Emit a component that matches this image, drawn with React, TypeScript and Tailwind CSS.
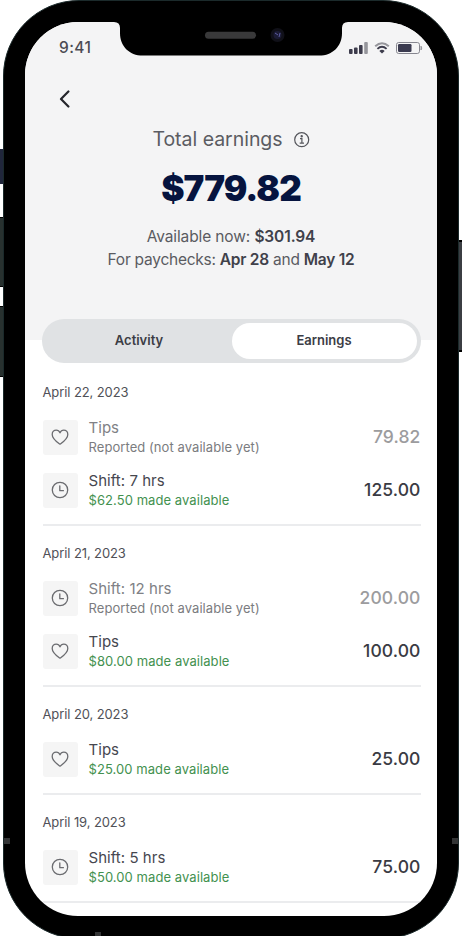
type Kind = "tips" | "shift";

interface Entry {
  kind: Kind;
  title: string;
  note: string;
  amount: string;
  pending?: boolean;
}

interface Day {
  date: string;
  entries: Entry[];
}

const days: Day[] = [
  {
    date: "April 22, 2023",
    entries: [
      { kind: "tips", title: "Tips", note: "Reported (not available yet)", amount: "79.82", pending: true },
      { kind: "shift", title: "Shift: 7 hrs", note: "$62.50 made available", amount: "125.00" },
    ],
  },
  {
    date: "April 21, 2023",
    entries: [
      { kind: "shift", title: "Shift: 12 hrs", note: "Reported (not available yet)", amount: "200.00", pending: true },
      { kind: "tips", title: "Tips", note: "$80.00 made available", amount: "100.00" },
    ],
  },
  {
    date: "April 20, 2023",
    entries: [{ kind: "tips", title: "Tips", note: "$25.00 made available", amount: "25.00" }],
  },
  {
    date: "April 19, 2023",
    entries: [{ kind: "shift", title: "Shift: 5 hrs", note: "$50.00 made available", amount: "75.00" }],
  },
];

function EntryIcon({ kind }: { kind: Kind }) {
  return (
    <svg width="18" height="18" viewBox="0 0 18 18" fill="none" stroke="#6b6c70" strokeWidth="1.3" strokeLinecap="round" strokeLinejoin="round">
      {kind === "tips" ? (
        <path d="M9 16.2C6.2 14.1 1.2 10.8 1.2 6.4 1.2 3.9 3 2.1 5.2 2.1 6.9 2.1 8.3 3.1 9 4.8 9.7 3.1 11.1 2.1 12.8 2.1 15 2.1 16.8 3.9 16.8 6.4 16.8 10.8 11.8 14.1 9 16.2Z" />
      ) : (
        <>
          <circle cx="9" cy="9" r="7.7" />
          <path d="M8.8 4.8V9.7H12.4" />
        </>
      )}
    </svg>
  );
}

function EntryRow({ entry }: { entry: Entry }) {
  return (
    <div className="flex h-[35px] items-center">
      <div className="flex size-[35px] shrink-0 items-center justify-center rounded-[3px] bg-[#f5f5f5] pb-px">
        <EntryIcon kind={entry.kind} />
      </div>
      <div className="mb-[2px] ml-[11px] flex-1 whitespace-nowrap">
        <div className={`text-[15px] leading-[20px] tracking-[0.04px] ${entry.pending ? "text-[#808185]" : "text-[#46474f]"}`}>{entry.title}</div>
        <div className={`text-[13px] leading-[18px] tracking-[0.07px] ${entry.pending ? "text-[#7b7c80]" : "text-[#43914f]"}`}>{entry.note}</div>
      </div>
      <div className={`mb-px text-[17.5px] leading-[20px] font-medium tracking-[0.1px] ${entry.pending ? "text-[#9c9c9e]" : "text-[#3a3b43]"}`}>{entry.amount}</div>
    </div>
  );
}

function DaySection({ day }: { day: Day }) {
  return (
    <section className="border-b-2 border-[#ebecee] pb-[16px]">
      <h2 className="text-[13px] leading-[20px] tracking-[-0.1px] text-[#505157]">{day.date}</h2>
      <div className="mt-[18px] flex flex-col gap-[18px]">
        {day.entries.map((entry) => (
          <EntryRow key={entry.title} entry={entry} />
        ))}
      </div>
    </section>
  );
}

function StatusIcons() {
  return (
    <svg width="76" height="16" viewBox="348 40 76 16" fill="none">
      <rect x="349" y="49" width="3.6" height="5" rx="1" fill="#3d3c4c" />
      <rect x="354" y="47.5" width="3.6" height="6.5" rx="1" fill="#3d3c4c" />
      <rect x="359" y="45" width="3.6" height="9" rx="1" fill="#3d3c4c" />
      <rect x="364.2" y="42" width="3.6" height="12" rx="1" fill="#96969c" />
      <path d="M375.2 46.3Q382 40.2 388.8 46.3" stroke="#96969c" strokeWidth="2" />
      <path d="M377.4 48.9Q382 44.8 386.6 48.9" stroke="#3d3c4c" strokeWidth="1.9" />
      <path d="M379.3 51Q382 48.6 384.7 51L382 53.6Z" fill="#3d3c4c" />
      <rect x="396.5" y="42.5" width="23" height="11" rx="2.2" stroke="#86868f" />
      <rect x="398" y="44" width="13.5" height="8" rx="1.2" fill="#3b3b50" />
      <path d="M421 46.2Q422.6 48 421 50Z" fill="#96969c" stroke="#96969c" />
    </svg>
  );
}

function Notch() {
  return (
    <div className="absolute top-0 left-1/2 -ml-[117px] h-[34px] w-[234px]">
      <svg width="234" height="34" viewBox="0 0 234 34" className="block">
        <path d="M0 0H234Q228 0 228 6V11C228 24 219 33.6 205 33.6H29C15 33.6 6 24 6 11V6Q6 0 0 0Z" fill="#000" />
        <rect x="91" y="9.7" width="51" height="7" rx="3.5" fill="#39393a" />
        <circle cx="163.5" cy="13" r="7" fill="#101018" />
        <circle cx="163.5" cy="13" r="4" fill="#1b1b35" />
        <path d="M161 11L164 13M166 11L165 15" stroke="#5d5da0" />
      </svg>
    </div>
  );
}

export default function App() {
  return (
    <div className="relative h-[936px] w-[462px] overflow-hidden bg-white font-['Inter','Liberation_Sans',sans-serif]">
      <div className="absolute top-[149px] left-0 h-[35px] w-[5px] bg-[#20263b]" />
      <div className="absolute top-[217px] left-0 h-[70px] w-[5px] border-y border-black bg-[#28312f]" />
      <div className="absolute top-[306px] left-0 h-[71px] w-[5px] border-y border-black bg-[#28312f]" />
      <div className="absolute top-[240px] right-0 h-[112px] w-[4px] border-y-2 border-black bg-[#3b3e43]" />

      <div className="relative ml-[3px] h-[939px] w-[456px] rounded-[76px] border border-[#1b2a2b] bg-black px-[21px] pt-[21px]">
        <div className="absolute top-[837px] left-0 h-[6px] w-[6px] bg-[#333435]" />
        <div className="absolute top-[837px] right-0 h-[6px] w-[6px] bg-[#333435]" />
        <div className="absolute top-[931px] left-[91px] h-[5px] w-[6px] bg-[#333435]" />

        <main className="relative flex h-[894px] w-[412px] flex-col overflow-hidden rounded-[53px] bg-white">
          <Notch />
          <header className="flex h-[318px] shrink-0 flex-col bg-[#f4f4f5]">
            <div className="mt-[16px] flex h-[20px] items-center justify-between pr-[13px] pl-[34px]">
              <span className="text-[15.5px] font-medium tracking-[0.4px] text-[#4b4b53]">9:41</span>
              <StatusIcons />
            </div>
            <button aria-label="Back" className="mt-[32px] ml-[33px] size-[18px]">
              <svg width="14" height="18" viewBox="0 0 14 18" fill="none" stroke="#24252b" strokeWidth="2.2" strokeLinecap="round" strokeLinejoin="round">
                <path d="M10.4 1.5L3 9L10.4 16.5" />
              </svg>
            </button>
            <div className="mt-[20px] flex h-[24px] items-center justify-center gap-[11px]">
              <h1 className="text-[19.5px] tracking-[-0.03px] text-[#5b5c62]">Total earnings</h1>
              <svg width="16" height="16" viewBox="0 0 16 16" fill="none" stroke="#55565c" strokeWidth="1.2">
                <circle cx="7.7" cy="7.7" r="7" />
                <path d="M6 6.7H7.9V11.1M5.7 11.1H10" />
                <circle cx="7.7" cy="4.2" r=".6" fill="#55565c" />
              </svg>
            </div>
            <div className="mt-[16px] text-center text-[35px] leading-[40px] font-black tracking-[-0.9px] text-[#06143f]">$779.82</div>
            <div className="mt-[17px] text-center text-[15.5px] leading-[23px] tracking-[-0.12px] text-[#5a5b61]">
              <p>
                Available now: <b className="font-semibold text-[#40414a]">$301.94</b>
              </p>
              <p className="tracking-[-0.25px]">
                For paychecks: <b className="font-semibold text-[#40414a]">Apr 28</b> and <b className="font-semibold text-[#40414a]">May 12</b>
              </p>
            </div>
          </header>

          <div className="relative mx-[17px] mt-[-21px] flex h-[44px] w-[379px] shrink-0 rounded-full bg-[#e0e2e4] p-[4px]">
            <button className="h-[36px] w-[186px] text-[13px] font-semibold text-[#3c3d45]">Activity</button>
            <button className="h-[36px] w-[185px] rounded-full bg-white pr-px text-[13px] font-semibold text-[#3c3d45]">Earnings</button>
          </div>

          <div className="mt-[19px] ml-[17.5px] flex w-[378px] flex-col gap-[17px]">
            {days.map((day) => (
              <DaySection key={day.date} day={day} />
            ))}
          </div>
        </main>
      </div>
    </div>
  );
}
